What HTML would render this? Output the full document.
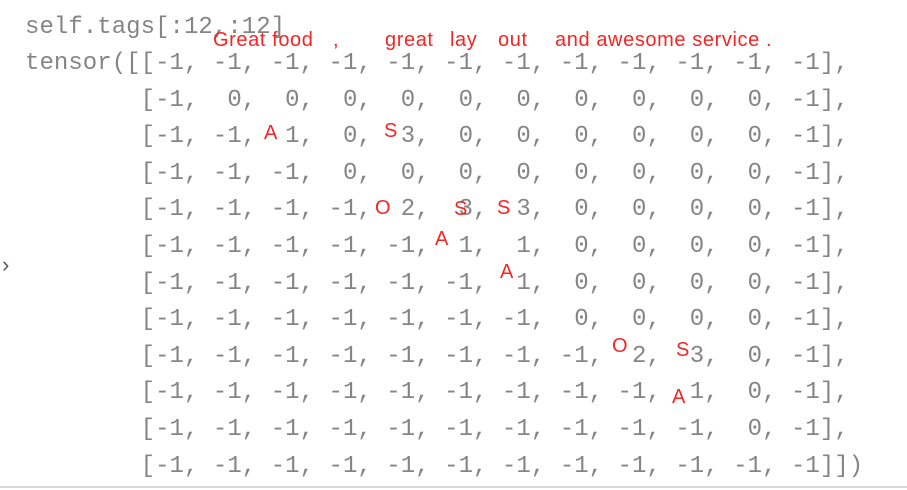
<!DOCTYPE html>
<html><head><meta charset="utf-8"><style>
html,body{margin:0;padding:0;background:#fff;width:907px;height:490px;overflow:hidden;position:relative}
pre{position:absolute;left:25px;top:9.5px;margin:0;font-family:"Liberation Mono",monospace;font-size:24px;line-height:36.6px;color:#858585;letter-spacing:0.05px}
.r{position:absolute;font-family:"Liberation Sans",sans-serif;font-size:20px;letter-spacing:0.6px;color:#f52525;line-height:1;white-space:pre}
.line{position:absolute;left:0;top:486px;width:907px;height:2px;background:#d8d8d8}
.chev{position:absolute;left:2px;top:252px;font-family:"Liberation Sans",sans-serif;font-size:22px;color:#556}
</style></head><body>
<pre>self.tags[:12,:12]
tensor([[-1, -1, -1, -1, -1, -1, -1, -1, -1, -1, -1, -1],
        [-1,  0,  0,  0,  0,  0,  0,  0,  0,  0,  0, -1],
        [-1, -1,  1,  0,  3,  0,  0,  0,  0,  0,  0, -1],
        [-1, -1, -1,  0,  0,  0,  0,  0,  0,  0,  0, -1],
        [-1, -1, -1, -1,  2,  3,  3,  0,  0,  0,  0, -1],
        [-1, -1, -1, -1, -1,  1,  1,  0,  0,  0,  0, -1],
        [-1, -1, -1, -1, -1, -1,  1,  0,  0,  0,  0, -1],
        [-1, -1, -1, -1, -1, -1, -1,  0,  0,  0,  0, -1],
        [-1, -1, -1, -1, -1, -1, -1, -1,  2,  3,  0, -1],
        [-1, -1, -1, -1, -1, -1, -1, -1, -1,  1,  0, -1],
        [-1, -1, -1, -1, -1, -1, -1, -1, -1, -1,  0, -1],
        [-1, -1, -1, -1, -1, -1, -1, -1, -1, -1, -1, -1]])</pre>
<div class="chev">›</div>
<div class="r" style="left:213px;top:30px">Great food</div>
<div class="r" style="left:333px;top:30px">,</div>
<div class="r" style="left:385px;top:30px">great</div>
<div class="r" style="left:450px;top:30px">lay</div>
<div class="r" style="left:498px;top:30px">out</div>
<div class="r" style="left:555px;top:30px">and awesome service .</div>
<div class="r" style="left:264px;top:123px">A</div>
<div class="r" style="left:384px;top:121px">S</div>
<div class="r" style="left:375px;top:198px">O</div>
<div class="r" style="left:454px;top:199px">S</div>
<div class="r" style="left:497px;top:198px">S</div>
<div class="r" style="left:435px;top:229px">A</div>
<div class="r" style="left:500px;top:262px">A</div>
<div class="r" style="left:612px;top:336px">O</div>
<div class="r" style="left:676px;top:340px">S</div>
<div class="r" style="left:672px;top:387px">A</div>
<div class="line"></div>
</body></html>
